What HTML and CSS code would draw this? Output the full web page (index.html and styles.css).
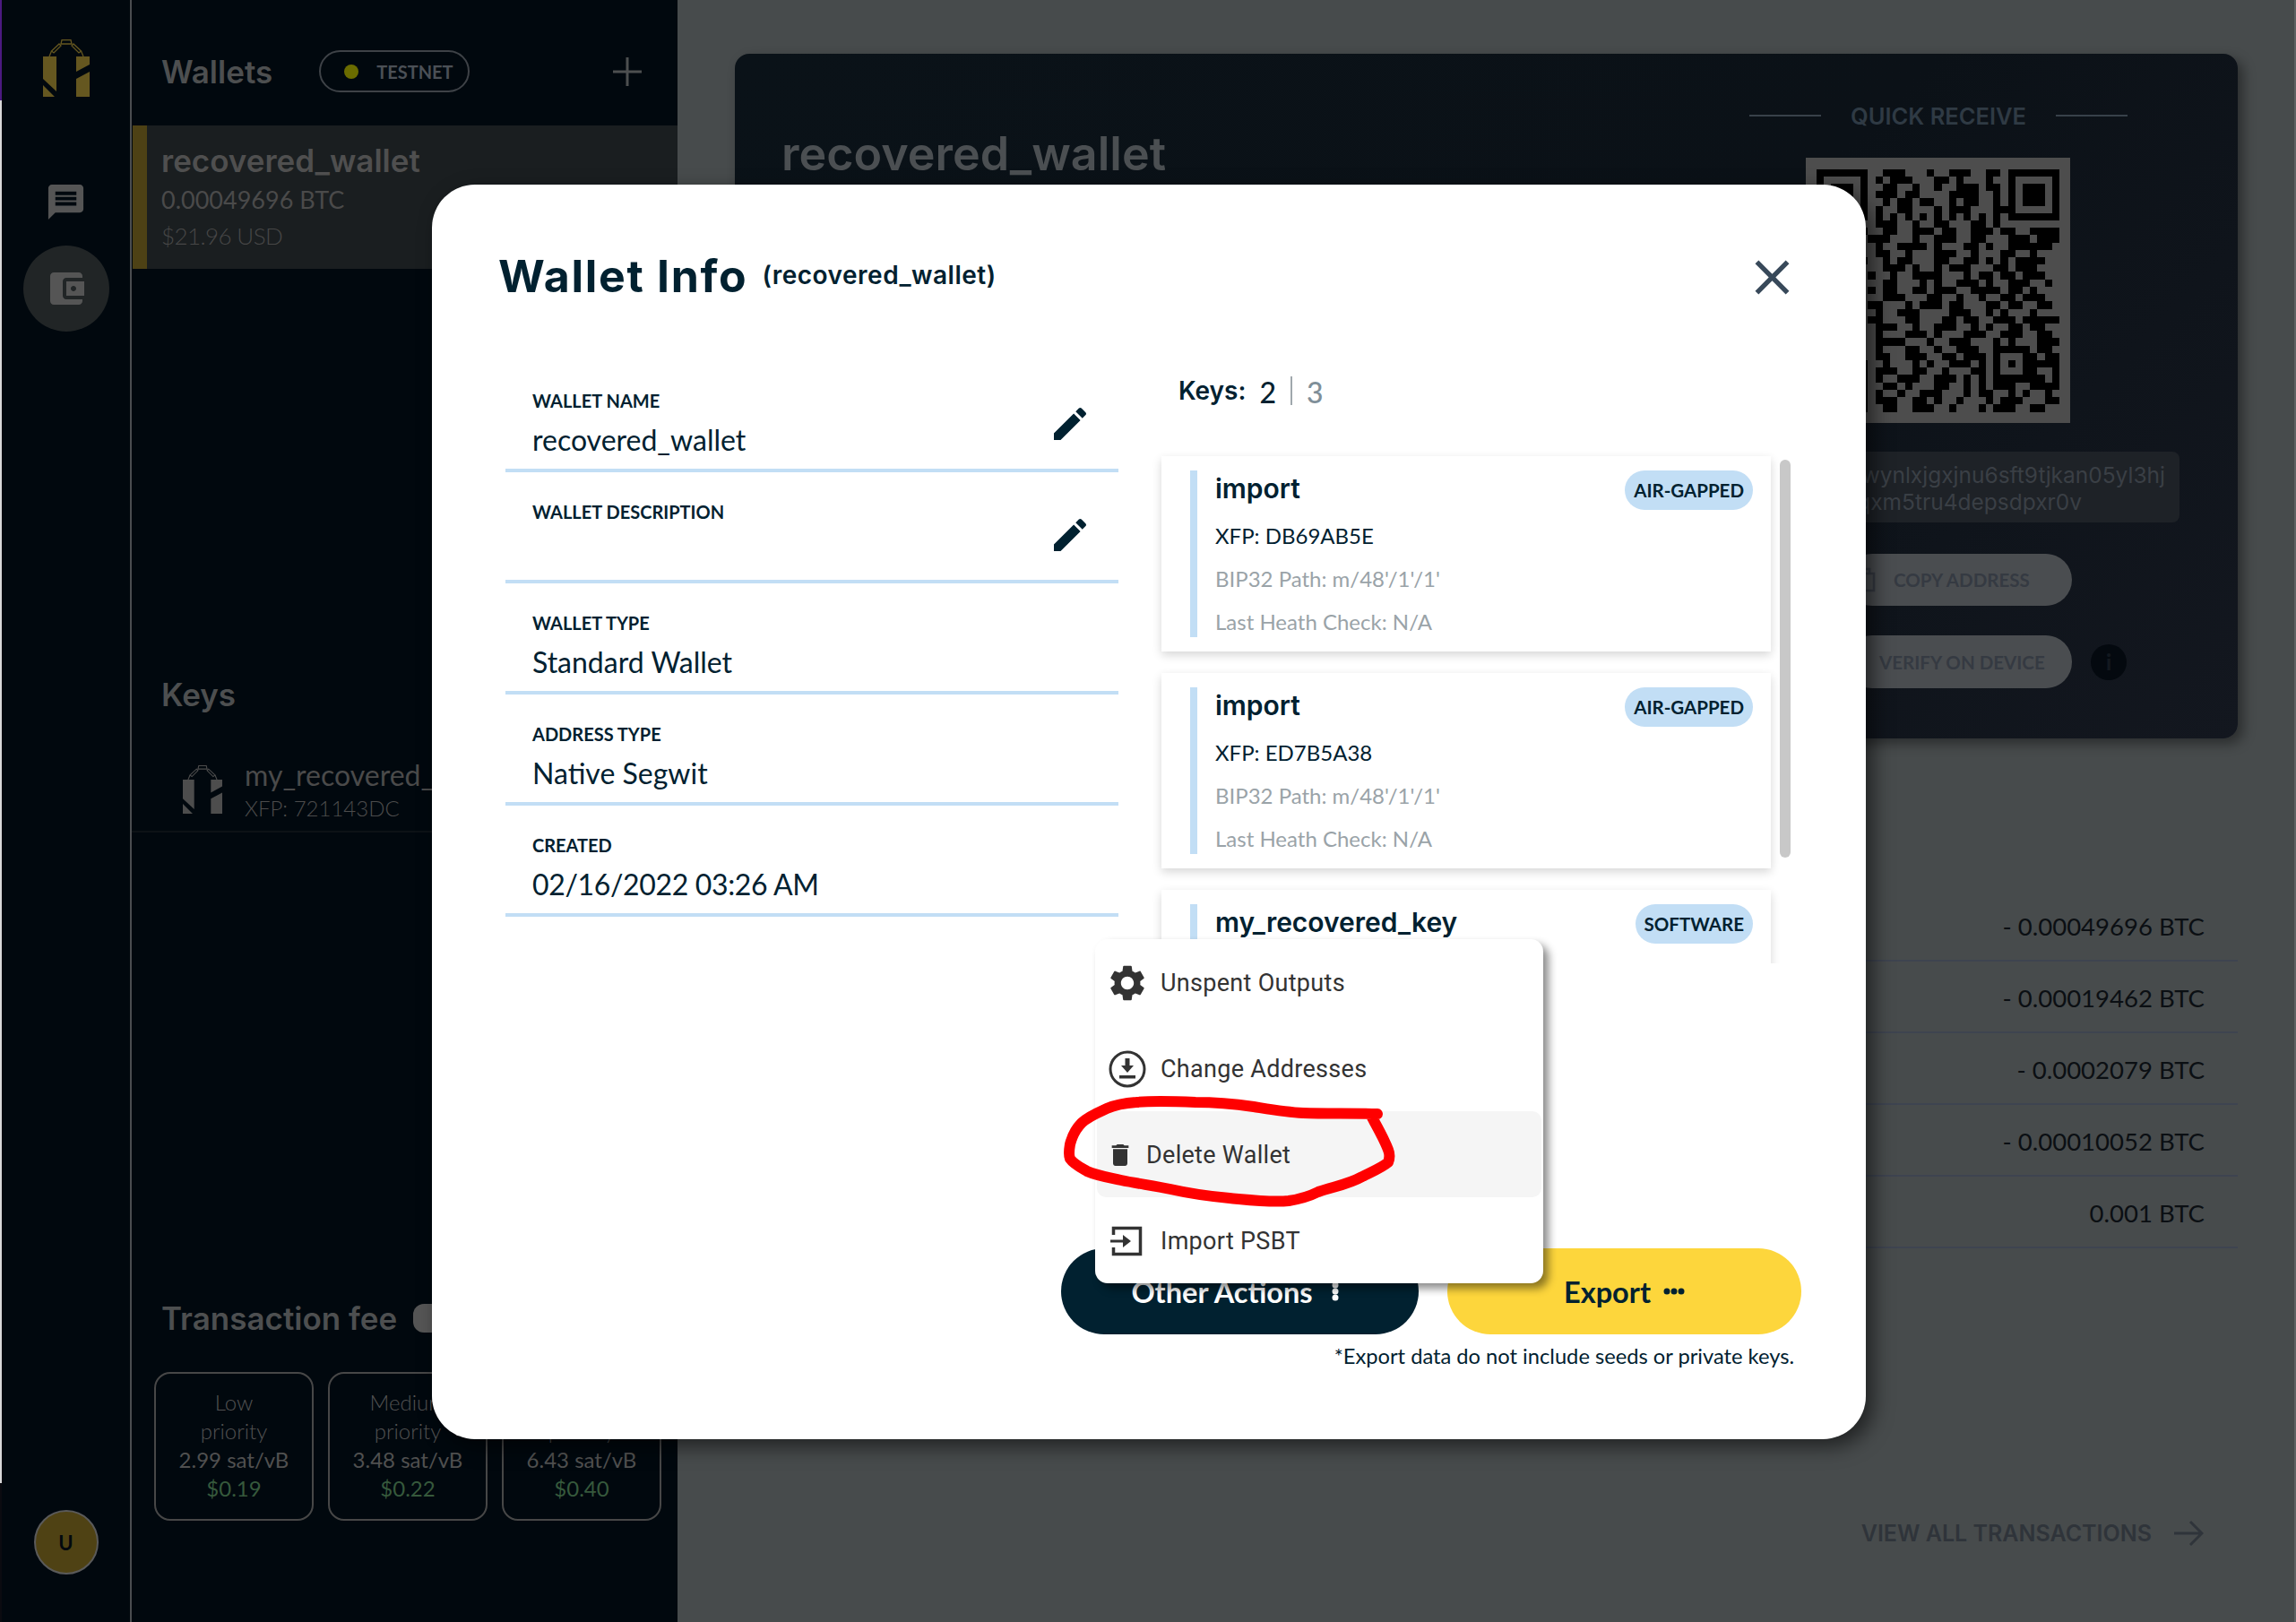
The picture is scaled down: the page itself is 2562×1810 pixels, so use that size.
FILE: index.html
```html
<!DOCTYPE html>
<html lang="en">

<head>
    <meta charset="UTF-8">
    <meta name="viewport" content="width=device-width, initial-scale=1.0">
    <title>Wallet Info</title>
    <link rel="stylesheet" href="styles.css">
</head>

<body>
    <svg class="defs" width="0" height="0">
        <symbol id="logo" viewBox="0 0 52 64">
            <path fill="currentColor" d="M0 19H15V58L0 44ZM0 51 13 64H0ZM37 19H52V28L37 36ZM37 44 52 36V64H37Z" />
            <g fill="none" stroke="currentColor" stroke-width="1.3">
                <path d="M20 5 21 .7H31L32 5Z" />
                <path d="M18 5 20 7 12 15 9.500 13ZM34 5 32 7 40 15 42.500 13Z" />
                <path d="M9.500 13 7 19M42.500 13 45 19" />
            </g>
        </symbol>
        <symbol id="edit" viewBox="0 0 24 24">
            <path fill="currentColor" d="M3 17.250V21h3.750L17.810 9.940l-3.750-3.750L3 17.250zM20.710 7.040c.39-.39.39-1.020 0-1.410l-2.340-2.340c-.39-.39-1.020-.39-1.410 0l-1.830 1.830 3.750 3.750 1.830-1.830z" />
        </symbol>
    </svg>

    <div class="app">
        <div class="edge"></div>

        <!-- icon rail -->
        <nav class="rail">
            <svg class="rail-logo"><use href="#logo" /></svg>
            <svg class="rail-chat" viewBox="0 0 24 24"><path fill="currentColor" d="M20 2H4c-1.100 0-1.990.9-1.990 2L2 22l4-4h14c1.100 0 2-.9 2-2V4c0-1.100-.9-2-2-2zm-2 12H6v-2h12v2zm0-3H6V9h12v2zm0-3H6V6h12v2z" /></svg>
            <div class="rail-active">
                <svg viewBox="0 0 24 24"><path fill="currentColor" d="M21 18v1c0 1.100-.9 2-2 2H5c-1.110 0-2-.9-2-2V5c0-1.100.89-2 2-2h14c1.100 0 2 .9 2 2v1h-9c-1.110 0-2 .9-2 2v8c0 1.100.89 2 2 2h9zm-9-2h10V8H12v8zm4-2.500c-.83 0-1.500-.67-1.500-1.500s.67-1.500 1.500-1.500 1.500.67 1.500 1.500-.67 1.500-1.500 1.500z" /></svg>
            </div>
            <div class="avatar">U</div>
        </nav>

        <!-- wallets and keys -->
        <aside class="panel">
            <div class="panel-head">
                <span class="panel-title">Wallets</span>
                <span class="net-pill"><i class="net-dot"></i>TESTNET</span>
                <svg class="plus" viewBox="0 0 32 32"><path d="M16 0V32M0 16H32" stroke="currentColor" stroke-width="3" /></svg>
            </div>
            <div class="wallet-item">
                <div class="wallet-name">recovered_wallet</div>
                <div class="wallet-btc">0.00049696 BTC</div>
                <div class="wallet-usd">$21.96 USD</div>
            </div>

            <div class="panel-title keys-title">Keys</div>
            <div class="key-item">
                <svg class="key-logo"><use href="#logo" /></svg>
                <div class="key-text">
                    <div class="key-name">my_recovered_key</div>
                    <div class="key-xfp">XFP: 721143DC</div>
                </div>
            </div>

            <div class="fee-head">
                <span class="panel-title">Transaction fee</span>
                <span class="fee-pill">&lt;</span>
            </div>
            <div class="fee-grid">
                <div class="fee-card">
                    <div class="fee-label">Low<br>priority</div>
                    <div class="fee-rate">2.99 sat/vB</div>
                    <div class="fee-usd">$0.19</div>
                </div>
                <div class="fee-card">
                    <div class="fee-label">Medium<br>priority</div>
                    <div class="fee-rate">3.48 sat/vB</div>
                    <div class="fee-usd">$0.22</div>
                </div>
                <div class="fee-card">
                    <div class="fee-label">High<br>priority</div>
                    <div class="fee-rate">6.43 sat/vB</div>
                    <div class="fee-usd">$0.40</div>
                </div>
            </div>
        </aside>

        <!-- wallet page behind the dialog -->
        <main class="main">
            <section class="wallet-card">
                <h1 class="wallet-card-title">recovered_wallet</h1>
                <div class="receive">
                    <div class="receive-head"><i></i><span>QUICK RECEIVE</span><i></i></div>
                    <div class="qr">
                        <svg viewBox="0 0 33 33" shape-rendering="crispEdges">
                            <path fill="#000" fill-rule="evenodd" d="M0 0H7V7H0ZM1 1V6H6V1ZM2 2H5V5H2ZM26 0H33V7H26ZM27 1V6H32V1ZM28 2H31V5H28ZM0 26H7V33H0ZM1 27V32H6V27ZM2 28H5V31H2ZM24 24H29V29H24ZM25 25V28H28V25ZM26 26H27V27H26Z" />
                            <path stroke="#000" stroke-width="1" fill="none" d="
                                M9 .5h3m3 0h1m2 0h3m2 0h2
                                M8 1.500h1m1 0h3m3 0h2m1 0h1m3 0h1
                                M9 2.500h2m2 0h1m2 0h1m2 0h3m1 0h2
                                M8 3.500h3m1 0h2m4 0h4m2 0h1m1 0h1
                                M9 4.500h1m1 0h2m1 0h2m2 0h1m1 0h2m2 0h1
                                M8 5.500h1m2 0h2m3 0h1m1 0h3m3 0h2
                                M8 6.500h1m1 0h1m1 0h1m1 0h1m1 0h1m1 0h1m1 0h1m1 0h1m1 0h1
                                M8 7.500h3m2 0h1m2 0h2m3 0h2m1 0h1
                                M0 8.500h1m1 0h3m1 0h1m2 0h2m2 0h3m1 0h2m2 0h3m1 0h2m2 0h5
                                M3 9.500h2m2 0h3m3 0h1m2 0h3m2 0h2m3 0h3m1 0h3
                                M1 10.500h4m3 0h1m2 0h4m1 0h1m3 0h2m1 0h1m2 0h6
                                M2 11.500h2m4 0h2m2 0h1m3 0h3m2 0h1m3 0h2m2 0h1
                                M0 12.500h3m3 0h1m2 0h1m1 0h2m3 0h2m2 0h2m1 0h1m1 0h1m1 0h4
                                M4 13.500h2m3 0h3m1 0h1m2 0h1m1 0h3m3 0h2m1 0h3
                                M1 14.500h1m5 0h1m2 0h1m2 0h4m3 0h1m1 0h2m1 0h2m1 0h3
                                M3 15.500h3m3 0h2m3 0h1m1 0h1m2 0h3m1 0h1m2 0h3m2 0h1
                                M0 16.500h2m5 0h1m1 0h2m2 0h2m1 0h3m2 0h4m1 0h2m1 0h1
                                M2 17.500h3m4 0h3m3 0h2m2 0h1m2 0h1m2 0h2m1 0h3
                                M1 18.500h2m4 0h2m3 0h1m1 0h3m1 0h2m3 0h2m1 0h2m2 0h2
                                M0 19.500h3m5 0h1m2 0h3m4 0h3m2 0h1m1 0h1m3 0h1
                                M2 20.500h1m4 0h2m3 0h2m3 0h2m1 0h2m2 0h3m1 0h5
                                M1 21.500h4m3 0h3m2 0h1m2 0h3m2 0h1m1 0h1m2 0h2m1 0h2
                                M0 22.500h2m6 0h1m3 0h3m1 0h1m3 0h3m2 0h3m2 0h2
                                M2 23.500h1m5 0h4m3 0h1m2 0h3m3 0h1m1 0h1m3 0h3
                                M1 24.500h2m5 0h1m3 0h2m2 0h1m2 0h3m5 0h2m1 0h2
                                M8 25.500h2m2 0h3m2 0h2m1 0h3m6 0h1m1 0h2
                                M9 26.500h1m3 0h1m1 0h1m2 0h3m1 0h1m6 0h4
                                M8 27.500h3m2 0h2m2 0h1m3 0h2m5 0h2m2 0h1
                                M8 28.500h1m2 0h3m2 0h3m1 0h1m1 0h1m4 0h1m1 0h2m1 0h1
                                M9 29.500h2m1 0h1m3 0h2m2 0h1m1 0h1m1 0h3m2 0h4
                                M8 30.500h1m2 0h1m2 0h3m3 0h1m1 0h2m2 0h1m1 0h1m2 0h1
                                M8 31.500h3m2 0h2m1 0h1m2 0h1m3 0h1m1 0h3m3 0h2
                                M9 32.500h2m2 0h3m2 0h1m3 0h1m1 0h3m2 0h2" />
                        </svg>
                    </div>
                    <div class="address">
                        <div>tb1q5wynlxjgxjnu6sft9tjkan05yl3hj</div>
                        <div class="address-end">7qxm5tru4depsdpxr0v</div>
                    </div>
                    <div class="receive-btn copy-btn">
                        <svg width="22" height="28" viewBox="0 0 22 28"><path d="M2 7V26H20V7ZM7 7V2H15V7" fill="none" stroke="currentColor" stroke-width="2.500" /></svg>
                        COPY ADDRESS
                    </div>
                    <div class="verify-row">
                        <div class="receive-btn verify-btn">VERIFY ON DEVICE</div>
                        <div class="info-dot">i</div>
                    </div>
                </div>
            </section>

            <section class="tx-list">
                <div class="tx-row">- 0.00049696 BTC</div>
                <div class="tx-row">- 0.00019462 BTC</div>
                <div class="tx-row">- 0.0002079 BTC</div>
                <div class="tx-row">- 0.00010052 BTC</div>
                <div class="tx-row">0.001 BTC</div>
            </section>
            <div class="view-all">
                <span>VIEW ALL TRANSACTIONS</span>
                <svg width="34" height="30" viewBox="0 0 34 30"><path d="M1 15H32M19 2 32 15 19 28" fill="none" stroke="currentColor" stroke-width="3" /></svg>
            </div>
        </main>
    </div>

    <!-- wallet info dialog -->
    <div class="overlay">
        <div class="modal">
            <div class="modal-head">
                <h2 class="modal-title">Wallet Info<small>(recovered_wallet)</small></h2>
                <svg class="modal-close" viewBox="0 0 24 24"><path fill="currentColor" d="M19 6.410L17.590 5 12 10.590 6.410 5 5 6.410 10.590 12 5 17.590 6.410 19 12 13.410 17.590 19 19 17.590 13.410 12z" /></svg>
            </div>

            <div class="modal-body">
                <div class="fields">
                    <div class="field">
                        <div class="field-label">WALLET NAME</div>
                        <div class="field-value">recovered_wallet</div>
                        <svg class="field-edit"><use href="#edit" /></svg>
                    </div>
                    <div class="field">
                        <div class="field-label">WALLET DESCRIPTION</div>
                        <svg class="field-edit"><use href="#edit" /></svg>
                    </div>
                    <div class="field">
                        <div class="field-label">WALLET TYPE</div>
                        <div class="field-value">Standard Wallet</div>
                    </div>
                    <div class="field">
                        <div class="field-label">ADDRESS TYPE</div>
                        <div class="field-value">Native Segwit</div>
                    </div>
                    <div class="field">
                        <div class="field-label">CREATED</div>
                        <div class="field-value field-date">02/16/2022 03:26 AM</div>
                    </div>
                </div>

                <div class="keys">
                    <div class="keys-head">
                        <span class="keys-word">Keys:</span>
                        <span class="keys-num">2</span>
                        <span class="keys-sep"></span>
                        <span class="keys-num keys-total">3</span>
                    </div>
                    <div class="keys-view">
                        <div class="keys-list">
                            <div class="key-card">
                                <div class="key-card-top">
                                    <span class="key-card-name">import</span>
                                    <span class="key-badge">AIR-GAPPED</span>
                                </div>
                                <div class="key-card-xfp">XFP: DB69AB5E</div>
                                <div class="key-card-muted">BIP32 Path: m/48'/1'/1'</div>
                                <div class="key-card-muted">Last Heath Check: N/A</div>
                            </div>
                            <div class="key-card">
                                <div class="key-card-top">
                                    <span class="key-card-name">import</span>
                                    <span class="key-badge">AIR-GAPPED</span>
                                </div>
                                <div class="key-card-xfp">XFP: ED7B5A38</div>
                                <div class="key-card-muted">BIP32 Path: m/48'/1'/1'</div>
                                <div class="key-card-muted">Last Heath Check: N/A</div>
                            </div>
                            <div class="key-card">
                                <div class="key-card-top">
                                    <span class="key-card-name">my_recovered_key</span>
                                    <span class="key-badge">SOFTWARE</span>
                                </div>
                            </div>
                        </div>
                        <div class="keys-scroll"></div>
                    </div>
                </div>
            </div>

            <div class="modal-foot">
                <div class="btn btn-dark">Other Actions
                    <svg class="btn-dots" width="10" height="22" viewBox="0 0 10 22"><circle cx="5" cy="4" r="3.500" /><circle cx="5" cy="11" r="3.500" /><circle cx="5" cy="18" r="3.500" /></svg>
                </div>
                <div class="btn btn-yellow">Export
                    <svg class="btn-dots" width="24" height="10" viewBox="0 0 24 10"><circle cx="4" cy="5" r="3.500" /><circle cx="12" cy="5" r="3.500" /><circle cx="20" cy="5" r="3.500" /></svg>
                </div>
            </div>
            <div class="modal-note">*Export data do not include seeds or private keys.</div>

            <div class="menu">
                <div class="menu-item">
                    <svg class="menu-icon" viewBox="0 0 24 24"><path fill="currentColor" d="M19.140 12.940c.04-.3.06-.61.06-.94 0-.32-.02-.64-.07-.94l2.030-1.580c.18-.14.23-.41.12-.61l-1.920-3.320c-.12-.22-.37-.29-.59-.22l-2.390.96c-.5-.38-1.030-.7-1.620-.94l-.36-2.540c-.04-.24-.24-.41-.48-.41h-3.840c-.24 0-.43.17-.47.41l-.36 2.540c-.59.24-1.130.57-1.620.94l-2.390-.96c-.22-.08-.47 0-.59.22L2.740 8.870c-.12.21-.08.47.12.61l2.030 1.580c-.05.3-.09.63-.09.94s.02.64.07.94l-2.030 1.580c-.18.14-.23.41-.12.61l1.920 3.320c.12.22.37.29.59.22l2.390-.96c.5.38 1.030.7 1.620.94l.36 2.540c.05.24.24.41.48.41h3.840c.24 0 .44-.17.47-.41l.36-2.540c.59-.24 1.130-.56 1.620-.94l2.390.96c.22.08.47 0 .59-.22l1.920-3.320c.12-.22.07-.47-.12-.61l-2.010-1.580zM12 15.600c-1.980 0-3.600-1.620-3.600-3.600s1.620-3.600 3.600-3.600 3.600 1.620 3.600 3.600-1.620 3.600-3.600 3.600z" /></svg>
                    Unspent Outputs
                </div>
                <div class="menu-item">
                    <svg class="menu-icon" viewBox="0 0 48 48">
                        <circle cx="24" cy="24" r="19" fill="none" stroke="currentColor" stroke-width="3" />
                        <path fill="currentColor" d="M21.500 12H26.500V20H31L24 28 17 20H21.500ZM15 31H33V34.500H15Z" />
                    </svg>
                    Change Addresses
                </div>
                <div class="menu-item menu-item-hover">
                    <svg class="menu-icon-small" viewBox="0 0 24 24"><path fill="currentColor" d="M6 19c0 1.100.9 2 2 2h8c1.100 0 2-.9 2-2V7H6v12zM19 4h-3.500l-1-1h-5l-1 1H5v2h14V4z" /></svg>
                    Delete Wallet
                </div>
                <div class="menu-item">
                    <svg class="menu-icon" viewBox="0 0 48 48">
                        <path fill="none" stroke="currentColor" stroke-width="3.500" d="M8.500 17V9.500H38.500V38.500H8.500V31" />
                        <path fill="currentColor" d="M5 22.500H19V17L28 24 19 31V25.500H5Z" />
                    </svg>
                    Import PSBT
                </div>
            </div>
        </div>
    </div>

    <!-- red marker drawn on the screenshot -->
    <svg class="ink" viewBox="0 0 2562 1810">
        <path d="M1537 1243C1510 1242 1480 1243 1454 1242C1435 1241 1418 1238 1399 1235C1378 1232 1356 1230 1334 1230C1312 1229 1288 1228 1268 1230C1254 1231 1244 1233 1235 1237C1224 1242 1214 1246 1207 1253C1200 1260 1196 1269 1194 1277C1193 1283 1192 1288 1194 1293C1198 1299 1206 1303 1213 1307C1224 1312 1238 1314 1251 1317C1270 1321 1288 1323 1306 1327C1328 1332 1350 1335 1372 1337C1394 1339 1418 1342 1438 1340C1451 1338 1461 1335 1471 1330C1488 1324 1504 1322 1520 1313C1532 1307 1542 1303 1549 1297C1551 1292 1551 1288 1549 1283C1544 1270 1537 1258 1531 1247" fill="none" stroke="#ff0000" stroke-width="12" stroke-linecap="round" stroke-linejoin="round" />
    </svg>
</body>

</html>
```

FILE: styles.css
```css
* {
    box-sizing: border-box;
}

body {
    position: relative;
    width: 2562px;
    height: 1810px;
    margin: 0;
    overflow: hidden;
    font-family: "Lato", "Liberation Sans", sans-serif;
    background-color: #474b4c;
}

h1,
h2 {
    margin: 0;
}

.defs {
    position: absolute;
}

.app {
    display: flex;
    height: 100%;
}

.edge {
    width: 2px;
    background: linear-gradient(#4b1a80 0 112px, #d8d8d8 112px 1655px, #0b0b10 1655px);
}

/* icon rail */
.rail {
    display: flex;
    flex-direction: column;
    align-items: center;
    width: 145px;
    padding-top: 44px;
    color: #555;
    background-color: #01080e;
    border-right: 2px solid #4a4d50;
}

.rail-logo {
    width: 52px;
    height: 64px;
    color: #655720;
}

.rail-chat {
    width: 47px;
    height: 47px;
    margin-top: 94px;
}

.rail-active {
    display: flex;
    align-items: center;
    justify-content: center;
    width: 96px;
    height: 96px;
    margin-top: 25px;
    background-color: #212526;
    border-radius: 50%;
}

.rail-active svg {
    width: 48px;
    height: 48px;
}

.avatar {
    display: flex;
    align-items: center;
    justify-content: center;
    width: 72px;
    height: 72px;
    margin-top: auto;
    margin-bottom: 53px;
    font-size: 22px;
    font-weight: 700;
    color: #01080e;
    background-color: #4f4214;
    border: 2px solid #5a5a5a;
    border-radius: 50%;
}

/* wallets panel */
.panel {
    width: 609px;
    color: #4d4d4d;
    background-color: #01080e;
}

.panel-head {
    display: flex;
    align-items: center;
    padding: 56px 0 37px 33px;
}

.panel-title {
    font-family: "Inter", "Liberation Sans", sans-serif;
    font-size: 35px;
    font-weight: 600;
    line-height: 40px;
    color: #4d4f50;
}

.net-pill {
    display: flex;
    align-items: center;
    width: 168px;
    height: 47px;
    margin-left: 52px;
    padding-left: 26px;
    font-size: 20px;
    font-weight: 700;
    color: #4b5056;
    border: 2px solid #3e4247;
    border-radius: 24px;
}

.net-dot {
    width: 16px;
    height: 16px;
    margin-right: 20px;
    background-color: #6b6c00;
    border-radius: 50%;
}

.plus {
    width: 32px;
    height: 32px;
    margin-left: auto;
    margin-right: 40px;
    color: #4d4f50;
}

.wallet-item {
    display: flex;
    flex-direction: column;
    justify-content: center;
    height: 160px;
    margin-left: 1px;
    padding: 2px 0 0 16px;
    background-color: #1a1e20;
    border-left: 16px solid #4d4115;
}

.wallet-name {
    font-family: "Inter", "Liberation Sans", sans-serif;
    font-size: 35px;
    font-weight: 600;
    line-height: 40px;
    color: #4f4f4f;
}

.wallet-btc {
    margin-top: 4px;
    font-size: 27px;
    line-height: 40px;
    color: #4a4a4a;
}

.wallet-usd {
    font-size: 26px;
    font-weight: 300;
    letter-spacing: -0.6px;
    line-height: 40px;
    color: #474747;
}

.keys-title {
    margin-top: 455px;
    padding-left: 33px;
}

.key-item {
    display: flex;
    align-items: center;
    gap: 25px;
    height: 94px;
    margin-top: 40px;
    padding-left: 57px;
    border-bottom: 2px solid #0d1216;
}

.key-logo {
    width: 44px;
    height: 56px;
    color: #4d4d4d;
}

.key-text {
    padding-top: 3px;
}

.key-name {
    font-size: 32px;
    line-height: 37px;
    color: #4a4a4a;
}

.key-xfp {
    font-size: 24px;
    font-weight: 300;
    line-height: 37px;
    color: #4c4c4c;
}

.fee-head {
    display: flex;
    align-items: center;
    gap: 18px;
    margin-top: 522px;
    padding-left: 33px;
}

.fee-pill {
    width: 80px;
    height: 32px;
    padding-left: 20px;
    font-size: 22px;
    font-weight: 700;
    line-height: 32px;
    color: #01080e;
    background-color: #555;
    border-radius: 12px;
}

.fee-grid {
    display: grid;
    grid-template-columns: repeat(3, 178px);
    gap: 16px;
    margin-top: 40px;
    padding-left: 25px;
}

.fee-card {
    height: 166px;
    padding-top: 16px;
    font-size: 24px;
    line-height: 32px;
    text-align: center;
    border: 2px solid #474747;
    border-radius: 18px;
}

.fee-label {
    font-weight: 300;
    color: #525252;
}

.fee-rate {
    color: #505050;
}

.fee-usd {
    color: #36593c;
}

/* page behind the dialog */
.main {
    flex: 1;
    padding: 60px 63px 0 64px;
    border-right: 2px solid #5e6162;
}

.wallet-card {
    display: flex;
    justify-content: space-between;
    height: 764px;
    background: linear-gradient(135deg, #0a1218, #0b1117 55%, #13171f);
    border-radius: 16px;
    box-shadow: 6px 6px 14px rgba(0, 0, 0, 0.4);
}

.wallet-card-title {
    padding: 82px 0 0 52px;
    font-family: "Inter", "Liberation Sans", sans-serif;
    font-size: 52px;
    font-weight: 600;
    line-height: 60px;
    color: #4b4f52;
}

.receive {
    width: 538px;
    margin-right: 65px;
    padding-top: 54px;
}

.receive-head {
    display: flex;
    align-items: center;
    justify-content: center;
    gap: 33px;
    height: 30px;
    font-family: "Inter", "Liberation Sans", sans-serif;
    font-size: 25.500px;
    font-weight: 600;
    color: #2f3a44;
}

.receive-head i {
    width: 80px;
    height: 2px;
    background-color: #38414a;
}

.qr {
    width: 295px;
    height: 296px;
    margin: 32px 0 0 121px;
    padding: 12px;
    background-color: #4d4d4d;
}

.qr svg {
    display: block;
    width: 271px;
    height: 272px;
}

.address {
    height: 79px;
    margin-top: 32px;
    padding: 11px 16px 0 0;
    overflow: hidden;
    font-family: "Inter", "Liberation Sans", sans-serif;
    font-size: 24.500px;
    line-height: 30px;
    color: #3a3f45;
    text-align: right;
    white-space: nowrap;
    background-color: #1e2227;
    border-radius: 8px;
}

.address-end {
    margin-right: 93px;
}

.receive-btn {
    display: flex;
    align-items: center;
    width: 252px;
    height: 58px;
    margin-left: 166px;
    font-size: 20.500px;
    font-weight: 700;
    color: #353a42;
    background-color: #4a4d50;
    border-radius: 29px;
}

.copy-btn {
    gap: 20px;
    margin-top: 35px;
    padding-left: 11px;
}

.verify-row {
    display: flex;
    align-items: center;
    gap: 21px;
    margin-top: 33px;
}

.verify-btn {
    height: 59px;
    padding-left: 37px;
    white-space: nowrap;
}

.info-dot {
    width: 40px;
    height: 40px;
    font-size: 24px;
    font-weight: 900;
    line-height: 40px;
    color: #12181f;
    text-align: center;
    background-color: #04090f;
    border-radius: 50%;
}

.tx-list {
    margin-top: 169px;
}

.tx-row {
    height: 80px;
    padding: 20px 37px 0 0;
    font-size: 27.500px;
    line-height: 42px;
    color: #0b0f13;
    text-align: right;
    border-bottom: 2px solid #3e4450;
}

.view-all {
    display: flex;
    align-items: center;
    justify-content: flex-end;
    gap: 24px;
    margin-top: 303px;
    padding-right: 38px;
    font-family: "Inter", "Liberation Sans", sans-serif;
    font-size: 25px;
    font-weight: 600;
    color: #2f343a;
}

/* dialog */
.overlay {
    position: absolute;
    top: 0;
    left: 0;
    display: flex;
    align-items: center;
    justify-content: center;
    width: 100%;
    height: 100%;
    padding: 2px 0 0 2px;
}

.modal {
    position: relative;
    width: 1600px;
    height: 1400px;
    padding: 71px 72px 0 74px;
    color: #012130;
    background-color: #fff;
    border-radius: 48px;
    box-shadow: 8px 8px 22px rgba(0, 0, 0, 0.55);
}

.modal-head {
    display: flex;
    align-items: center;
    justify-content: space-between;
}

.modal-title {
    margin-bottom: 4px;
    font-family: "Inter", "Liberation Sans", sans-serif;
    font-size: 50px;
    font-weight: 700;
    letter-spacing: 1.700px;
}

.modal-title small {
    margin-left: 16px;
    font-size: 28px;
    font-weight: 600;
    letter-spacing: 0.5px;
    vertical-align: 9px;
}

.modal-close {
    width: 65px;
    height: 65px;
    color: #38495a;
}

.modal-body {
    display: flex;
    gap: 38px;
    margin: 61px 0 0 8px;
}

.fields {
    width: 684px;
}

.field {
    position: relative;
    height: 124px;
    padding: 32px 0 0 30px;
    border-bottom: 4px solid #c2def5;
}

.field-label {
    font-size: 20px;
    font-weight: 700;
    line-height: 24px;
}

.field-value {
    margin-top: 11px;
    font-size: 32px;
    line-height: 42px;
}

.field-date {
    letter-spacing: -0.35px;
}

.field-edit {
    position: absolute;
    top: 46px;
    right: 30px;
    width: 48px;
    height: 48px;
}

.keys {
    width: 714px;
}

.keys-head {
    display: flex;
    align-items: center;
    height: 40px;
    margin-top: 13px;
    padding-left: 29px;
}

.keys-word {
    margin-right: 15px;
    font-family: "Inter", "Liberation Sans", sans-serif;
    font-size: 28px;
    font-weight: 600;
}

.keys-num {
    padding-top: 4px;
    font-size: 32px;
    font-weight: 500;
    line-height: 40px;
}

.keys-sep {
    width: 2px;
    height: 32px;
    margin: 0 16px;
    background-color: #a0a8ad;
}

.keys-total {
    color: #7f8f99;
}

.keys-view {
    display: flex;
    gap: 10px;
    height: 574px;
    margin-top: 45px;
    padding-left: 10px;
    overflow: hidden;
}

.keys-list {
    width: 680px;
    padding-top: 8px;
}

.key-card {
    position: relative;
    height: 218px;
    margin-bottom: 24px;
    padding: 16px 20px 0 60px;
    background-color: #fff;
    box-shadow: 0 4px 10px rgba(0, 0, 0, 0.16);
}

.key-card::before {
    content: '';
    position: absolute;
    top: 16px;
    bottom: 16px;
    left: 32px;
    width: 8px;
    background-color: #c2def5;
}

.key-card-top {
    display: flex;
    align-items: flex-start;
    justify-content: space-between;
    height: 48px;
}

.key-card-name {
    font-family: "Inter", "Liberation Sans", sans-serif;
    font-size: 30px;
    font-weight: 600;
    line-height: 40px;
}

.key-badge {
    height: 44px;
    padding: 0 10px;
    font-size: 20.500px;
    font-weight: 700;
    line-height: 45px;
    background-color: #c2def5;
    border-radius: 22px;
}

.key-card-xfp,
.key-card-muted {
    font-size: 24px;
    line-height: 48px;
}

.key-card-xfp {
    margin-top: 1px;
}

.key-card-muted {
    color: #9aa3a8;
}

.keys-scroll {
    width: 12px;
    height: 444px;
    margin-top: 12px;
    background-color: #c8c8c8;
    border-radius: 6px;
}

.modal-foot {
    display: flex;
    justify-content: flex-end;
    gap: 32px;
    margin-top: 318px;
}

.btn {
    display: flex;
    align-items: center;
    justify-content: center;
    gap: 14px;
    height: 96px;
    font-size: 32.500px;
    font-weight: 700;
    border-radius: 48px;
}

.btn-dark {
    width: 399px;
    padding-right: 10px;
    color: #fff;
    background-color: #012130;
}

.btn-dark .btn-dots {
    margin-left: 6px;
    fill: #fff;
}

.btn-yellow {
    width: 395px;
    background-color: #fdd63c;
}

.btn-yellow .btn-dots {
    fill: #012130;
}

.modal-note {
    margin-top: 8px;
    padding-right: 8px;
    font-size: 23.700px;
    line-height: 32px;
    text-align: right;
}

.menu {
    position: absolute;
    top: 842px;
    left: 740px;
    width: 500px;
    padding: 0 2px;
    font-family: "Roboto", "Liberation Sans", sans-serif;
    font-size: 27px;
    letter-spacing: 0.3px;
    color: #333;
    background-color: #fff;
    border-radius: 14px;
    box-shadow: 6px 6px 10px rgba(0, 0, 0, 0.45);
}

.menu-item {
    display: flex;
    align-items: center;
    gap: 13px;
    height: 96px;
    padding: 2px 0 0 10px;
    border-radius: 10px;
}

.menu-item-hover {
    background-color: #f5f5f5;
}

.menu-icon {
    flex: none;
    width: 48px;
    height: 48px;
}

.menu-icon-small {
    flex: none;
    width: 32px;
    height: 32px;
}

.ink {
    position: absolute;
    top: 0;
    left: 0;
    width: 2562px;
    height: 1810px;
    pointer-events: none;
}
```
